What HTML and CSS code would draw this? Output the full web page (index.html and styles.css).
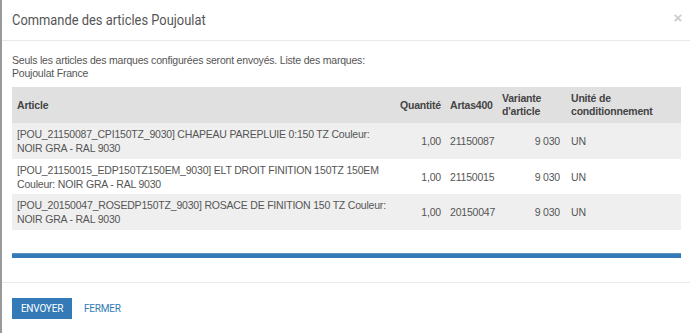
FILE: index.html
```html
<!DOCTYPE html>
<html lang="fr">
<head>
    <meta charset="UTF-8">
    <title>Commande des articles Poujoulat</title>
    <link rel="stylesheet" href="styles.css">
</head>
<body>
    <div class="modal">
        <div class="modal-header">
            <h4 class="modal-title">Commande des articles Poujoulat</h4>
            <span class="close">&times;</span>
        </div>
        <div class="modal-body">
            <p class="info">Seuls les articles des marques configurées seront envoyés. Liste des marques:<br>Poujoulat France</p>
            <table class="articles">
                <colgroup>
                    <col class="col-article">
                    <col class="col-qty">
                    <col class="col-code">
                    <col class="col-variant">
                    <col class="col-unit">
                </colgroup>
                <thead>
                    <tr>
                        <th>Article</th>
                        <th class="num">Quantité</th>
                        <th>Artas400</th>
                        <th class="variant">Variante d'article</th>
                        <th>Unité de conditionnement</th>
                    </tr>
                </thead>
                <tbody>
                    <tr>
                        <td>[POU_21150087_CPI150TZ_9030] CHAPEAU PAREPLUIE 0:150 TZ Couleur: NOIR GRA - RAL 9030</td>
                        <td class="num">1,00</td>
                        <td>21150087</td>
                        <td class="num variant">9 030</td>
                        <td>UN</td>
                    </tr>
                    <tr>
                        <td>[POU_21150015_EDP150TZ150EM_9030] ELT DROIT FINITION 150TZ 150EM Couleur: NOIR GRA - RAL 9030</td>
                        <td class="num">1,00</td>
                        <td>21150015</td>
                        <td class="num variant">9 030</td>
                        <td>UN</td>
                    </tr>
                    <tr>
                        <td>[POU_20150047_ROSEDP150TZ_9030] ROSACE DE FINITION 150 TZ Couleur: NOIR GRA - RAL 9030</td>
                        <td class="num">1,00</td>
                        <td>20150047</td>
                        <td class="num variant">9 030</td>
                        <td>UN</td>
                    </tr>
                </tbody>
            </table>
            <div class="progress"><div class="progress-bar"></div></div>
        </div>
        <div class="modal-footer">
            <button class="btn btn-primary">Envoyer</button>
            <button class="btn btn-link">Fermer</button>
        </div>
    </div>
</body>
</html>
```

FILE: styles.css
```css
* {
    margin: 0;
    padding: 0;
    box-sizing: border-box;
}

body {
    background: #fff;
    font-family: "Liberation Sans", Arial, sans-serif;
    font-size: 10.5px;
    letter-spacing: -0.2px;
    color: #555;
}

.modal {
    min-height: 333px;
    border-left: 2px solid #999;
    background: #fff;
}

/* en-tête */
.modal-header {
    display: flex;
    align-items: center;
    justify-content: space-between;
    height: 41px;
    padding: 0 8px 1px 10px;
    border-bottom: 1px solid #e9e9e9;
}

.modal-title {
    font-family: Roboto, "Liberation Sans", sans-serif;
    font-weight: 400;
    font-size: 14px;
    letter-spacing: 0;
    color: #555;
    transform: scaleX(0.92);
    transform-origin: left center;
}

.close {
    font-family: "Liberation Sans", sans-serif;
    font-size: 15px;
    font-weight: bold;
    color: #ccc;
    margin-top: -4px;
}

/* contenu */
.modal-body {
    padding: 13px 7px 24px 10px;
}

.info {
    line-height: 13px;
    margin-bottom: 7px;
}

.articles {
    width: 669px;
    border-collapse: collapse;
    table-layout: fixed;
}

.col-article { width: 381px; }
.col-qty { width: 52px; }
.col-code { width: 52px; }
.col-variant { width: 69px; }
.col-unit { width: 115px; }

.articles th {
    background: #e0e0e0;
    color: #444;
    font-weight: bold;
    text-align: left;
    line-height: 13px;
    padding: 5px 4px 5px 5px;
    vertical-align: middle;
}

.articles td {
    line-height: 14px;
    padding: 4px 4px 3.5px 5px;
    vertical-align: middle;
}

.articles td.variant {
    padding-right: 6px;
}

.articles tbody tr:nth-child(odd) {
    background: #efefef;
}

.articles .num {
    text-align: right;
}

.progress {
    margin-top: 23px;
    height: 5px;
    width: 669px;
    background: #f5f5f5;
}

.progress-bar {
    width: 100%;
    height: 100%;
    background: #337ab7;
    border-top: 1px solid #5b93c6;
}

/* pied */
.modal-footer {
    display: flex;
    gap: 12px;
    align-items: center;
    padding: 15px 10px;
    border-top: 1px solid #e9e9e9;
}

.btn {
    font-family: Roboto, "Liberation Sans", sans-serif;
    font-size: 10px;
    letter-spacing: -0.2px;
    text-transform: uppercase;
    border: none;
    background: none;
    cursor: pointer;
}

.btn-primary {
    background: #337ab7;
    color: #fff;
    width: 60px;
    height: 21px;
}

.btn-link {
    color: #337ab7;
}
```
